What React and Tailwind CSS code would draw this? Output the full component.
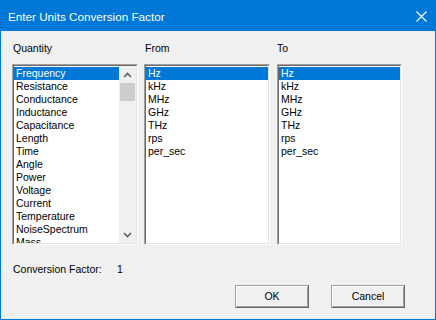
import React from 'react';

const quantities = ['Frequency', 'Resistance', 'Conductance', 'Inductance', 'Capacitance', 'Length', 'Time', 'Angle', 'Power', 'Voltage', 'Current', 'Temperature', 'NoiseSpectrum', 'Mass'];
const units = ['Hz', 'kHz', 'MHz', 'GHz', 'THz', 'rps', 'per_sec'];

const Sunken = ({ className, children }) => (
  <div className={`border border-t-[#a0a0a0] border-l-[#a0a0a0] border-b-white border-r-white ${className}`}>
    <div className="h-full border border-t-[#696969] border-l-[#696969] border-b-[#e3e3e3] border-r-[#e3e3e3] bg-white flex overflow-hidden">
      {children}
    </div>
  </div>
);

const Items = ({ items }) => (
  <div className="flex-1 pt-px overflow-hidden">
    {items.map((item, i) => (
      <div
        key={item}
        className={`h-[13px] leading-[13px] px-[2px] whitespace-nowrap ${i === 0 ? 'bg-[#0078d7] text-white' : 'text-black'}`}
      >
        {item}
      </div>
    ))}
  </div>
);

const Chevron = ({ down }) => (
  <svg width="9" height="6" viewBox="0 0 9 6">
    <path d={down ? 'M1 1 L4.5 4.5 L8 1' : 'M1 5 L4.5 1.5 L8 5'} fill="none" stroke="#606060" strokeWidth="1.6" />
  </svg>
);

const Button = ({ children }) => (
  <div className="w-[74px] h-[23px] border border-t-[#a0a0a0] border-l-[#a0a0a0] border-b-[#696969] border-r-[#696969]">
    <div className="h-full border border-t-white border-l-white border-b-[#a0a0a0] border-r-[#a0a0a0] bg-[#f0f0f0] flex items-center justify-center text-black">
      {children}
    </div>
  </div>
);

export default function App() {
  return (
    <div className="w-[436px] h-[320px] flex flex-col border border-t-0 border-[#0078d7] bg-[#f0f0f0] text-[10.5px]" style={{ fontFamily: '"Liberation Sans", Arial, sans-serif' }}>
      <div className="h-[31px] shrink-0 bg-[#0078d7] flex items-center justify-between pl-[8px] pr-[9px] -mx-px">
        <span className="text-white text-[11.7px] leading-none pt-[2px]">Enter Units Conversion Factor</span>
        <svg width="11" height="11" viewBox="0 0 11 11" className="mt-[1px]">
          <path d="M0.5 0.5 L10.5 10.5 M10.5 0.5 L0.5 10.5" stroke="white" strokeWidth="1.1" />
        </svg>
      </div>

      <div className="flex-1 flex flex-col pl-[11px] pt-[11px]">
        <div className="flex">
          <div className="w-[126px] mr-[6px] flex flex-col">
            <div className="h-[13px] leading-[13px] mb-[9px] pl-px">Quantity</div>
            <Sunken className="h-[181px]">
              <Items items={quantities} />
              <div className="w-[17px] shrink-0 bg-[#f0f0f0] flex flex-col">
                <div className="h-[17px] flex items-center justify-center"><Chevron /></div>
                <div className="h-[18px] mx-px bg-[#cdcdcd]" />
                <div className="flex-1" />
                <div className="h-[17px] flex items-center justify-center"><Chevron down /></div>
              </div>
            </Sunken>
          </div>
          <div className="w-[126px] mr-[7px] flex flex-col">
            <div className="h-[13px] leading-[13px] mb-[9px] pl-px">From</div>
            <Sunken className="h-[181px]">
              <Items items={units} />
            </Sunken>
          </div>
          <div className="w-[125px] flex flex-col">
            <div className="h-[13px] leading-[13px] mb-[9px]">To</div>
            <Sunken className="h-[181px]">
              <Items items={units} />
            </Sunken>
          </div>
        </div>

        <div className="flex h-[13px] leading-[13px] mt-[18px] pl-px">
          <span className="w-[104px]">Conversion Factor:</span>
          <span>1</span>
        </div>

        <div className="flex justify-end gap-[22px] mt-[9px] pr-[30px]">
          <Button>OK</Button>
          <Button>Cancel</Button>
        </div>
      </div>
    </div>
  );
}
